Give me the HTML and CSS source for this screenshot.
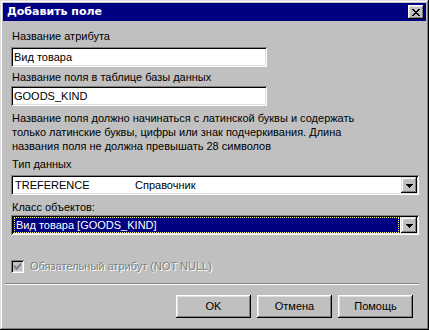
FILE: index.html
```html
<!DOCTYPE html>
<html>
<head>
<meta charset="utf-8">
<link rel="stylesheet" href="styles.css">
</head>
<body>
<div class="window">
  <div class="titlebar">
    <span class="title">Добавить поле</span>
    <div class="close">
      <svg width="8" height="7" viewBox="0 0 8 7" shape-rendering="crispEdges"><path d="M0 0h2v1H0zM6 0h2v1H6zM1 1h2v1H1zM5 1h2v1H5zM2 2h4v1H2zM3 3h2v1H3zM2 4h4v1H2zM1 5h2v1H1zM5 5h2v1H5zM0 6h2v1H0zM6 6h2v1H6z" fill="#000"/></svg>
    </div>
  </div>
  <div class="content">
    <div class="label l1">Название атрибута</div>
    <div class="field short">Вид товара</div>
    <div class="label l2">Название поля в таблице базы данных</div>
    <div class="field short">GOODS_KIND</div>
    <p class="note">Название поля должно начинаться с латинской буквы и содержать<br>только латинские буквы, цифры или знак подчеркивания. Длина<br>названия поля не должна превышать 28 символов</p>
    <div class="label l3">Тип данных</div>
    <div class="combo">
      <div class="combo-text"><span class="c1">TREFERENCE</span><span>Справочник</span></div>
      <div class="drop"><svg width="7" height="4" viewBox="0 0 7 4" shape-rendering="crispEdges"><path d="M0 0h7v1H0zM1 1h5v1H1zM2 2h3v1H2zM3 3h1v1H3z" fill="#000"/></svg></div>
    </div>
    <div class="label l4">Класс объектов:</div>
    <div class="combo">
      <div class="combo-text sel"><span class="focus">Вид товара [GOODS_KIND]</span></div>
      <div class="drop"><svg width="7" height="4" viewBox="0 0 7 4" shape-rendering="crispEdges"><path d="M0 0h7v1H0zM1 1h5v1H1zM2 2h3v1H2zM3 3h1v1H3z" fill="#000"/></svg></div>
    </div>
    <div class="check-row">
      <div class="checkbox"><svg width="7" height="7" viewBox="0 0 7 7" shape-rendering="crispEdges"><path d="M6 0h1v3H6zM5 1h1v3H5zM4 2h1v3H4zM3 3h1v3H3zM2 4h1v3H2zM1 3h1v3H1zM0 2h1v3H0z" fill="#808080"/></svg></div>
      <span class="disabled">Обязательный атрибут (NOT NULL)</span>
    </div>
    <div class="separator"></div>
    <div class="buttons">
      <div class="btn">OK</div>
      <div class="btn">Отмена</div>
      <div class="btn">Помощь</div>
    </div>
  </div>
</div>
</body>
</html>
```
FILE: styles.css
```css
html, body {
  margin: 0;
  padding: 0;
  background: #c0c0c0;
}
.window {
  width: 429px;
  height: 330px;
  box-sizing: border-box;
  padding: 3px;
  background: #c0c0c0;
  box-shadow: inset -1px -1px #000, inset 1px 1px #dfdfdf, inset -2px -2px #808080, inset 2px 2px #fff;
  font-family: "Liberation Sans", Arial, sans-serif;
  font-size: 11px;
  color: #000;
  display: flex;
  flex-direction: column;
}
.titlebar {
  height: 18px;
  background: #000080;
  display: flex;
  align-items: center;
  padding: 0 2px 0 4px;
}
.title {
  color: #fff;
  font-family: "DejaVu Sans", "Liberation Sans", sans-serif;
  font-weight: bold;
  font-size: 11px;
  flex: 1;
  line-height: 18px;
}
.close {
  width: 16px;
  height: 14px;
  background: #c0c0c0;
  box-shadow: inset -1px -1px #000, inset 1px 1px #fff, inset -2px -2px #808080, inset 2px 2px #dfdfdf;
  display: flex;
  align-items: center;
  justify-content: center;
}
.close svg { display: block; margin-left: -1px; }
.content {
  padding: 0 7px 0 8px;
  display: flex;
  flex-direction: column;
}
.label {
  line-height: 13px;
  height: 13px;
  padding-left: 1px;
}
.l1 { margin-top: 9px; margin-bottom: 4px; }
.l2 { margin-top: 4px; margin-bottom: 2px; }
.l3 { margin-top: 5px; margin-bottom: 4px; }
.l4 { margin-top: 6px; margin-bottom: 1px; }
.field {
  height: 20px;
  box-sizing: border-box;
  background: #fff;
  box-shadow: inset 1px 1px #808080, inset -1px -1px #fff, inset 2px 2px #000, inset -2px -2px #dfdfdf;
  padding: 0 3px;
  line-height: 20px;
}
.short { width: 256px; }
.note {
  margin: 5px 0 0 0;
  padding-left: 1px;
  line-height: 14px;
  white-space: nowrap;
}
.combo {
  height: 20px;
  box-sizing: border-box;
  background: #fff;
  box-shadow: inset 1px 1px #808080, inset -1px -1px #fff, inset 2px 2px #000, inset -2px -2px #dfdfdf;
  padding: 2px;
  display: flex;
}
.combo-text {
  flex: 1;
  padding: 0 1px;
  line-height: 16px;
  display: flex;
}
.c1 { width: 120px; padding-left: 1px; }
.sel {
  background: #000080;
  color: #fff;
  margin-right: 1px;
}
.focus {
  flex: 1;
  outline: 1px dotted #ffff80;
  outline-offset: -1px;
  padding-left: 2px;
  line-height: 16px;
}
.drop {
  width: 16px;
  height: 16px;
  background: #c0c0c0;
  box-shadow: inset -1px -1px #000, inset 1px 1px #dfdfdf, inset -2px -2px #808080, inset 2px 2px #fff;
  display: flex;
  align-items: center;
  justify-content: center;
}
.drop svg { display: block; margin-top: 1px; }
.check-row {
  margin-top: 25px;
  height: 13px;
  display: flex;
  align-items: center;
}
.checkbox {
  width: 13px;
  height: 13px;
  box-sizing: border-box;
  background: #c0c0c0;
  box-shadow: inset 1px 1px #808080, inset -1px -1px #fff, inset 2px 2px #000, inset -2px -2px #dfdfdf;
  display: flex;
  align-items: center;
  justify-content: center;
  margin-right: 6px;
}
.checkbox svg { display: block; }
.disabled {
  color: #808080;
  text-shadow: 1px 1px #fff;
  line-height: 13px;
}
.separator {
  margin: 10px 0 0 -6px;
  border-top: 1px solid #808080;
  border-bottom: 1px solid #fff;
  height: 0;
}
.buttons {
  margin-top: 10px;
  display: flex;
  justify-content: flex-end;
  gap: 6px;
  padding-right: 6px;
}
.btn {
  width: 75px;
  height: 23px;
  box-sizing: border-box;
  background: #c0c0c0;
  box-shadow: inset -1px -1px #000, inset 1px 1px #fff, inset -2px -2px #808080, inset 2px 2px #dfdfdf;
  display: flex;
  align-items: center;
  justify-content: center;
  line-height: 13px;
}
```
